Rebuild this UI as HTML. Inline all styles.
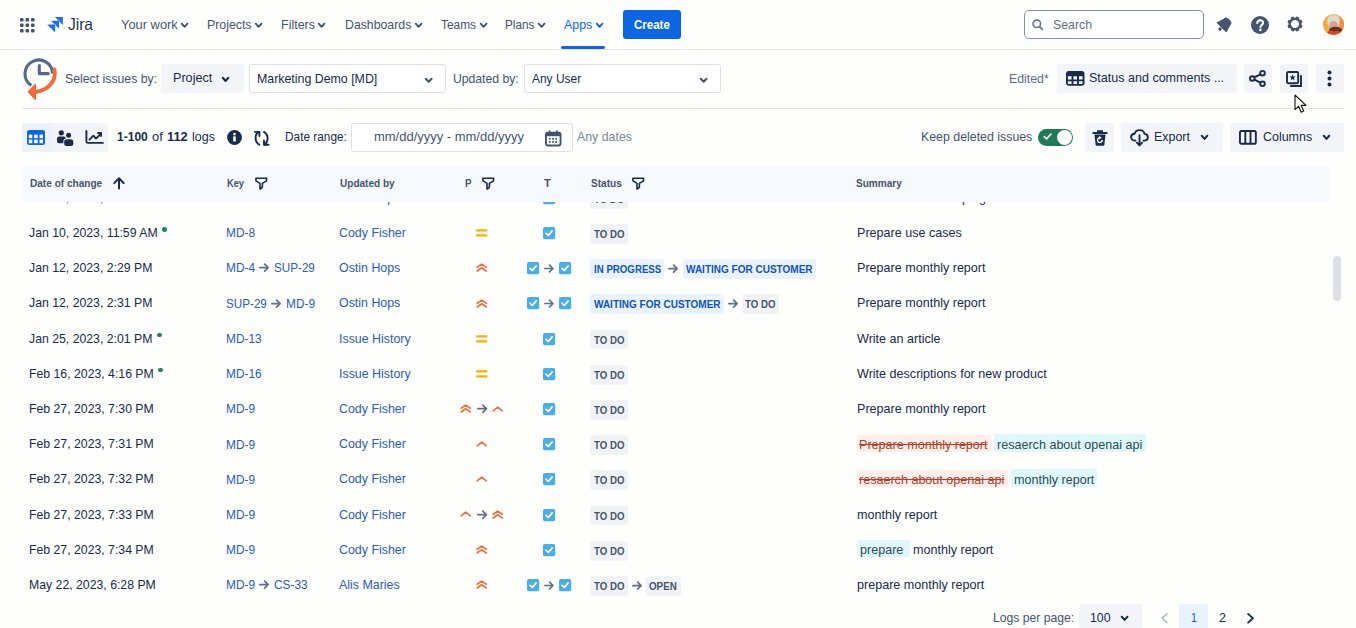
<!DOCTYPE html><html><head><meta charset="utf-8"><style>
html,body{margin:0;padding:0;background:#FEFEFD;width:1356px;height:628px;overflow:hidden;position:relative;font-family:"Liberation Sans", sans-serif;}
.t{position:absolute;white-space:nowrap;line-height:1;transform-origin:0 0;}
.b{position:absolute;}
.s{position:absolute;overflow:visible;}
</style></head><body>
<div class="b" style="left:0.00px;top:49.00px;width:1356.00px;height:1.00px;background:#E4E6EA;border-radius:0px;"></div>
<svg class="s" style="left:20.00px;top:17.60px;" width="14.60" height="14.60" viewBox="0 0 14.60 14.60"><rect x="0.00" y="0.00" width="3.6" height="3.6" rx="1.1" fill="#44546F"/><rect x="5.50" y="0.00" width="3.6" height="3.6" rx="1.1" fill="#44546F"/><rect x="11.00" y="0.00" width="3.6" height="3.6" rx="1.1" fill="#44546F"/><rect x="0.00" y="5.50" width="3.6" height="3.6" rx="1.1" fill="#44546F"/><rect x="5.50" y="5.50" width="3.6" height="3.6" rx="1.1" fill="#44546F"/><rect x="11.00" y="5.50" width="3.6" height="3.6" rx="1.1" fill="#44546F"/><rect x="0.00" y="11.00" width="3.6" height="3.6" rx="1.1" fill="#44546F"/><rect x="5.50" y="11.00" width="3.6" height="3.6" rx="1.1" fill="#44546F"/><rect x="11.00" y="11.00" width="3.6" height="3.6" rx="1.1" fill="#44546F"/></svg>
<svg class="s" style="left:44.00px;top:17.00px;" width="20.00" height="16.00" viewBox="0 0 20.00 16.00"><path d="M11.00 0.00 H18.90 V7.90 L15.30 4.60 V3.60 H14.30 Z" fill="#1D6FF0"/><path d="M7.10 3.70 H15.00 V11.60 L11.40 8.30 V7.30 H10.40 Z" fill="#1D6FF0"/><path d="M3.30 7.50 H11.20 V15.40 L7.60 12.10 V11.10 H6.60 Z" fill="#1D6FF0"/></svg>
<div class="t" style="left:68.40px;top:15.83px;font-size:16.5px;color:#26344F;font-weight:400;transform:scaleX(0.9404);">Jira</div>
<div class="t" style="left:120.60px;top:18.56px;font-size:12.8px;color:#44546F;font-weight:400;transform:scaleX(1.0063);">Your work</div>
<svg class="s" style="left:181.00px;top:22.90px;" width="7.20" height="4.70" viewBox="0 0 7.20 4.70"><path d="M0.71 0.71 L3.60 3.85 L6.49 0.71" fill="none" stroke="#44546F" stroke-width="1.9" stroke-linecap="round" stroke-linejoin="round"/></svg>
<div class="t" style="left:207.30px;top:18.56px;font-size:12.8px;color:#44546F;font-weight:400;transform:scaleX(0.9625);">Projects</div>
<svg class="s" style="left:255.00px;top:22.90px;" width="7.20" height="4.70" viewBox="0 0 7.20 4.70"><path d="M0.71 0.71 L3.60 3.85 L6.49 0.71" fill="none" stroke="#44546F" stroke-width="1.9" stroke-linecap="round" stroke-linejoin="round"/></svg>
<div class="t" style="left:281.00px;top:18.56px;font-size:12.8px;color:#44546F;font-weight:400;transform:scaleX(0.9758);">Filters</div>
<svg class="s" style="left:318.30px;top:22.90px;" width="7.20" height="4.70" viewBox="0 0 7.20 4.70"><path d="M0.71 0.71 L3.60 3.85 L6.49 0.71" fill="none" stroke="#44546F" stroke-width="1.9" stroke-linecap="round" stroke-linejoin="round"/></svg>
<div class="t" style="left:344.70px;top:18.56px;font-size:12.8px;color:#44546F;font-weight:400;transform:scaleX(0.9607);">Dashboards</div>
<svg class="s" style="left:415.20px;top:22.90px;" width="7.20" height="4.70" viewBox="0 0 7.20 4.70"><path d="M0.71 0.71 L3.60 3.85 L6.49 0.71" fill="none" stroke="#44546F" stroke-width="1.9" stroke-linecap="round" stroke-linejoin="round"/></svg>
<div class="t" style="left:440.50px;top:18.56px;font-size:12.8px;color:#44546F;font-weight:400;transform:scaleX(0.9284);">Teams</div>
<svg class="s" style="left:479.60px;top:22.90px;" width="7.20" height="4.70" viewBox="0 0 7.20 4.70"><path d="M0.71 0.71 L3.60 3.85 L6.49 0.71" fill="none" stroke="#44546F" stroke-width="1.9" stroke-linecap="round" stroke-linejoin="round"/></svg>
<div class="t" style="left:504.70px;top:18.56px;font-size:12.8px;color:#44546F;font-weight:400;transform:scaleX(0.9182);">Plans</div>
<svg class="s" style="left:538.30px;top:22.90px;" width="7.20" height="4.70" viewBox="0 0 7.20 4.70"><path d="M0.71 0.71 L3.60 3.85 L6.49 0.71" fill="none" stroke="#44546F" stroke-width="1.9" stroke-linecap="round" stroke-linejoin="round"/></svg>
<div class="t" style="left:564.00px;top:18.56px;font-size:12.8px;color:#0C66E4;font-weight:400;transform:scaleX(0.9666);">Apps</div>
<svg class="s" style="left:596.20px;top:22.90px;" width="7.20" height="4.70" viewBox="0 0 7.20 4.70"><path d="M0.71 0.71 L3.60 3.85 L6.49 0.71" fill="none" stroke="#0C66E4" stroke-width="1.9" stroke-linecap="round" stroke-linejoin="round"/></svg>
<div class="b" style="left:561.00px;top:46.30px;width:44.00px;height:3.00px;background:#0C66E4;border-radius:1.5px;"></div>
<div class="b" style="left:623.20px;top:10.00px;width:57.60px;height:28.70px;background:#0C66E4;border-radius:3px;"></div>
<div class="t" style="left:634.00px;top:18.03px;font-size:13.2px;color:#FFFFFF;font-weight:700;transform:scaleX(0.8738);">Create</div>
<div class="b" style="left:1024.30px;top:10.00px;width:179.30px;height:29.00px;background:#FFFFFF;border:1px solid #8590A2;box-sizing:border-box;border-radius:5px;"></div>
<svg class="s" style="left:1032.30px;top:18.80px;" width="11.50" height="11.50" viewBox="0 0 11.50 11.50"><circle cx="4.8" cy="4.8" r="3.8" fill="none" stroke="#626F86" stroke-width="1.5"/><path d="M7.6 7.6 L10.5 10.5" stroke="#626F86" stroke-width="1.6" stroke-linecap="round"/></svg>
<div class="t" style="left:1052.70px;top:18.00px;font-size:13.0px;color:#626F86;font-weight:400;transform:scaleX(0.9469);">Search</div>
<svg class="s" style="left:1215.60px;top:15.80px;" width="17.00" height="17.00" viewBox="0 0 17.00 17.00"><g transform="rotate(45 8.5 8.5)"><path d="M4.7 3.2 C5.2 1.3 11.8 1.3 12.3 3.2 L15 12.6 H2 Z" fill="#44546F" stroke="#44546F" stroke-width="0.8" stroke-linejoin="round"/><circle cx="8.5" cy="14.9" r="1.7" fill="#44546F"/></g></svg>
<svg class="s" style="left:1251.10px;top:15.70px;" width="18.00" height="18.00" viewBox="0 0 18.00 18.00"><circle cx="9" cy="9" r="9" fill="#44546F"/><path d="M6.3 7.1 C6.3 5.3 7.6 4.3 9.1 4.3 C10.8 4.3 12 5.4 12 6.9 C12 8.9 9.4 9.1 9.4 11" fill="none" stroke="#fff" stroke-width="2.1" stroke-linecap="round"/><circle cx="9.35" cy="13.9" r="1.3" fill="#fff"/></svg>
<svg class="s" style="left:1287.30px;top:16.30px;" width="16.00" height="16.00" viewBox="0 0 16.00 16.00"><rect x="6.4" y="0.4" width="3.2" height="3.4" rx="0.4" fill="#44546F" transform="rotate(22.5 8 8)"/><rect x="6.4" y="0.4" width="3.2" height="3.4" rx="0.4" fill="#44546F" transform="rotate(67.5 8 8)"/><rect x="6.4" y="0.4" width="3.2" height="3.4" rx="0.4" fill="#44546F" transform="rotate(112.5 8 8)"/><rect x="6.4" y="0.4" width="3.2" height="3.4" rx="0.4" fill="#44546F" transform="rotate(157.5 8 8)"/><rect x="6.4" y="0.4" width="3.2" height="3.4" rx="0.4" fill="#44546F" transform="rotate(202.5 8 8)"/><rect x="6.4" y="0.4" width="3.2" height="3.4" rx="0.4" fill="#44546F" transform="rotate(247.5 8 8)"/><rect x="6.4" y="0.4" width="3.2" height="3.4" rx="0.4" fill="#44546F" transform="rotate(292.5 8 8)"/><rect x="6.4" y="0.4" width="3.2" height="3.4" rx="0.4" fill="#44546F" transform="rotate(337.5 8 8)"/><circle cx="8" cy="8" r="5.3" fill="none" stroke="#44546F" stroke-width="2.4"/></svg>
<svg class="s" style="left:1323.00px;top:14.00px;" width="21.20" height="21.20" viewBox="0 0 21.20 21.20"><defs><clipPath id="avc"><circle cx="10.6" cy="10.6" r="10.5"/></clipPath></defs><g clip-path="url(#avc)"><rect width="21.2" height="21.2" fill="#E9B47A"/><rect x="0" width="5" height="21.2" fill="#F2A93A"/><rect x="16.5" width="5" height="21.2" fill="#EE8F3A"/><ellipse cx="10.4" cy="7.2" rx="6.4" ry="6.2" fill="#E4D6CA"/><ellipse cx="10.6" cy="11.2" rx="4.1" ry="4.3" fill="#D3A292"/><ellipse cx="12.5" cy="16" rx="6.5" ry="3.2" fill="#6E3024"/><path d="M2.5 21.2 C4 16.5 9 15.5 11 17.5 C13 15.8 18 16.5 19.5 21.2 Z" fill="#D9471F"/></g></svg>
<svg class="s" style="left:22.00px;top:55.00px;" width="40.00" height="48.00" viewBox="0 0 40.00 48.00"><g transform="translate(0 0.8)"><path d="M9.3 29.6 A13.8 13.8 0 1 1 30.6 17.8" fill="none" stroke="#55698A" stroke-width="3.1"/><path d="M17.3 9.7 V17.8 H26.3" fill="none" stroke="#55698A" stroke-width="3.1" stroke-linecap="round" stroke-linejoin="round"/></g><path d="M32.4 14.5 C34.6 25 27.5 35.3 12.5 37.2" fill="none" stroke="#F26B3A" stroke-width="4" stroke-linecap="round"/><path d="M6.3 36.8 L13.4 29.6 L13.4 44.3 Z" fill="#F26B3A" stroke="#F26B3A" stroke-width="1.4" stroke-linejoin="round"/></svg>
<div class="t" style="left:65.00px;top:71.63px;font-size:13.2px;color:#44546F;font-weight:400;transform:scaleX(0.9309);">Select issues by:</div>
<div class="b" style="left:161.00px;top:64.20px;width:82.90px;height:28.60px;background:#F2F4F7;border-radius:3px;"></div>
<div class="t" style="left:172.70px;top:70.73px;font-size:13.2px;color:#172B4D;font-weight:400;transform:scaleX(0.9566);">Project</div>
<svg class="s" style="left:222.20px;top:76.80px;" width="7.10" height="4.90" viewBox="0 0 7.10 4.90"><path d="M0.75 0.75 L3.55 4.00 L6.35 0.75" fill="none" stroke="#172B4D" stroke-width="2.0" stroke-linecap="round" stroke-linejoin="round"/></svg>
<div class="b" style="left:248.50px;top:64.20px;width:197.20px;height:28.40px;background:#FFFFFF;border:1px solid #DFE1E6;box-sizing:border-box;border-radius:3px;"></div>
<div class="t" style="left:256.80px;top:71.63px;font-size:13.2px;color:#172B4D;font-weight:400;transform:scaleX(0.9380);">Marketing Demo [MD]</div>
<svg class="s" style="left:425.00px;top:77.70px;" width="7.40" height="4.70" viewBox="0 0 7.40 4.70"><path d="M0.75 0.75 L3.70 3.80 L6.65 0.75" fill="none" stroke="#44546F" stroke-width="2.0" stroke-linecap="round" stroke-linejoin="round"/></svg>
<div class="t" style="left:453.30px;top:71.63px;font-size:13.2px;color:#44546F;font-weight:400;transform:scaleX(0.9231);">Updated by:</div>
<div class="b" style="left:523.50px;top:64.20px;width:197.20px;height:28.40px;background:#FFFFFF;border:1px solid #DFE1E6;box-sizing:border-box;border-radius:3px;"></div>
<div class="t" style="left:531.70px;top:71.63px;font-size:13.2px;color:#172B4D;font-weight:400;transform:scaleX(0.9064);">Any User</div>
<svg class="s" style="left:700.00px;top:77.70px;" width="7.30" height="4.70" viewBox="0 0 7.30 4.70"><path d="M0.75 0.75 L3.65 3.80 L6.55 0.75" fill="none" stroke="#44546F" stroke-width="2.0" stroke-linecap="round" stroke-linejoin="round"/></svg>
<div class="t" style="left:1009.20px;top:71.83px;font-size:13.2px;color:#626F86;font-weight:400;transform:scaleX(0.9351);">Edited*</div>
<div class="b" style="left:1057.20px;top:64.20px;width:179.60px;height:28.80px;background:#F2F4F7;border-radius:3px;"></div>
<svg class="s" style="left:1065.60px;top:71.30px;" width="18.50" height="14.80" viewBox="0 0 18.50 14.80"><rect x="0.95" y="0.95" width="16.6" height="12.9" rx="1.8" fill="none" stroke="#172B4D" stroke-width="1.9"/><rect x="1" y="1" width="16.5" height="4.2" fill="#172B4D"/><path d="M1 9.4 H17.5 M6.5 5 V13.8 M12 5 V13.8" stroke="#172B4D" stroke-width="1.9"/></svg>
<div class="t" style="left:1089.30px;top:71.33px;font-size:13.2px;color:#172B4D;font-weight:400;transform:scaleX(0.9500);">Status and comments ...</div>
<div class="b" style="left:1244.20px;top:64.20px;width:27.50px;height:28.80px;background:#F2F4F7;border-radius:3px;"></div>
<div class="b" style="left:1280.00px;top:64.20px;width:27.70px;height:28.80px;background:#F2F4F7;border-radius:3px;"></div>
<div class="b" style="left:1315.80px;top:64.20px;width:28.20px;height:28.80px;background:#F2F4F7;border-radius:3px;"></div>
<svg class="s" style="left:1249.30px;top:70.30px;" width="17.00" height="17.00" viewBox="0 0 17.00 17.00"><circle cx="3.3" cy="8.5" r="2.3" fill="none" stroke="#172B4D" stroke-width="1.9"/><circle cx="13.5" cy="3.2" r="2.3" fill="none" stroke="#172B4D" stroke-width="1.9"/><circle cx="13.5" cy="13.8" r="2.3" fill="none" stroke="#172B4D" stroke-width="1.9"/><path d="M5.4 7.4 L11.4 4.3 M5.4 9.6 L11.4 12.7" stroke="#172B4D" stroke-width="1.9"/></svg>
<svg class="s" style="left:1285.50px;top:70.50px;" width="17.00" height="17.00" viewBox="0 0 17.00 17.00"><rect x="1" y="1" width="11.2" height="11.2" rx="1.2" fill="none" stroke="#172B4D" stroke-width="1.9"/><path d="M15 4.2 V15 H4.2" fill="none" stroke="#172B4D" stroke-width="1.9"/><path d="M6.6 3.2 L7.4 5.4 L9.7 5.5 L7.9 6.9 L8.5 9.2 L6.6 7.9 L4.7 9.2 L5.3 6.9 L3.5 5.5 L5.8 5.4 Z" fill="#172B4D"/></svg>
<svg class="s" style="left:1327.40px;top:70.30px;" width="5.00" height="17.00" viewBox="0 0 5.00 17.00"><circle cx="2.5" cy="2.4" r="2" fill="#172B4D"/><circle cx="2.5" cy="8.5" r="2" fill="#172B4D"/><circle cx="2.5" cy="14.6" r="2" fill="#172B4D"/></svg>
<div class="b" style="left:22.00px;top:107.80px;width:1322.00px;height:1.00px;background:#DFE1E6;border-radius:0px;"></div>
<div class="b" style="left:22.00px;top:123.00px;width:86.00px;height:29.00px;background:#F2F4F7;border-radius:3px;"></div>
<div class="b" style="left:22.00px;top:123.00px;width:30.00px;height:29.00px;background:#ECF1FA;border-radius:3px;"></div>
<svg class="s" style="left:27.00px;top:130.00px;" width="18.00" height="15.00" viewBox="0 0 18.00 15.00"><rect x="0" y="0" width="18" height="15" rx="2.3" fill="#0C66E4"/><rect x="1.80" y="4.60" width="3.5" height="3.6" fill="#fff"/><rect x="7.15" y="4.60" width="3.5" height="3.6" fill="#fff"/><rect x="12.50" y="4.60" width="3.5" height="3.6" fill="#fff"/><rect x="1.80" y="9.60" width="3.5" height="3.6" fill="#fff"/><rect x="7.15" y="9.60" width="3.5" height="3.6" fill="#fff"/><rect x="12.50" y="9.60" width="3.5" height="3.6" fill="#fff"/></svg>
<svg class="s" style="left:56.80px;top:129.60px;" width="16.50" height="16.00" viewBox="0 0 16.50 16.00"><circle cx="4.3" cy="2.8" r="2.6" fill="#172B4D"/><rect x="0" y="6.6" width="8.8" height="6.6" rx="2.2" fill="#172B4D"/><circle cx="11.6" cy="5.3" r="3.3" fill="#F2F4F7"/><circle cx="11.6" cy="5.3" r="2.5" fill="#172B4D"/><rect x="6.4" y="8.6" width="10.1" height="7.6" rx="2.8" fill="#F2F4F7"/><rect x="7.2" y="9.3" width="9.1" height="6.7" rx="2.5" fill="#172B4D"/></svg>
<svg class="s" style="left:84.50px;top:130.30px;" width="19.00" height="14.50" viewBox="0 0 19.00 14.50"><path d="M1.4 1.0 V11.4 Q1.4 12.9 2.9 12.9 H17.9" fill="none" stroke="#172B4D" stroke-width="1.9" stroke-linecap="round"/><path d="M4.4 9.6 L8.4 5.6 L11.0 8.6 L15.6 4.0" fill="none" stroke="#172B4D" stroke-width="1.8" stroke-linecap="round" stroke-linejoin="round"/><path d="M12.4 3.0 H16.1 V6.8" fill="none" stroke="#172B4D" stroke-width="1.8" stroke-linejoin="round"/></svg>
<div class="t" style="left:116.50px;top:129.83px;font-size:13.2px;color:#172B4D;font-weight:700;transform:scaleX(0.9124);">1-100</div>
<div class="t" style="left:151.90px;top:129.83px;font-size:13.2px;color:#172B4D;font-weight:400;transform:scaleX(0.9811);">of</div>
<div class="t" style="left:167.10px;top:129.83px;font-size:13.2px;color:#172B4D;font-weight:700;transform:scaleX(0.9721);">112</div>
<div class="t" style="left:192.30px;top:129.83px;font-size:13.2px;color:#172B4D;font-weight:400;transform:scaleX(0.9457);">logs</div>
<svg class="s" style="left:226.60px;top:130.30px;" width="15.00" height="15.00" viewBox="0 0 15.00 15.00"><circle cx="7.5" cy="7.5" r="7.4" fill="#172B4D"/><circle cx="7.5" cy="4.1" r="1.35" fill="#fff"/><rect x="6.2" y="6.3" width="2.6" height="5.3" rx="0.6" fill="#fff"/></svg>
<svg class="s" style="left:254.20px;top:129.60px;" width="16.00" height="16.00" viewBox="0 0 16.00 16.00"><path d="M4.8 1.9 C0.4 4.6 0.4 11.6 5.4 14.8" fill="none" stroke="#172B4D" stroke-width="1.9" stroke-linecap="round"/><path d="M1.0 1.9 H5.4 V6.0" fill="none" stroke="#172B4D" stroke-width="1.9" stroke-linecap="round" stroke-linejoin="round"/><path d="M10.0 1.9 C14.8 5.0 14.6 11.6 10.6 14.8" fill="none" stroke="#172B4D" stroke-width="1.9" stroke-linecap="round"/><path d="M14.6 14.8 H10.0 V10.4" fill="none" stroke="#172B4D" stroke-width="1.9" stroke-linecap="round" stroke-linejoin="round"/></svg>
<div class="t" style="left:284.50px;top:129.83px;font-size:13.2px;color:#172B4D;font-weight:400;transform:scaleX(0.8975);">Date range:</div>
<div class="b" style="left:351.30px;top:123.30px;width:221.60px;height:28.30px;background:#FFFFFF;border:1px solid #DFE1E6;box-sizing:border-box;border-radius:3px;"></div>
<div class="t" style="left:373.50px;top:129.83px;font-size:13.2px;color:#44546F;font-weight:400;transform:scaleX(0.9840);">mm/dd/yyyy - mm/dd/yyyy</div>
<svg class="s" style="left:545.30px;top:129.60px;" width="16.50" height="16.50" viewBox="0 0 16.50 16.50"><rect x="0.95" y="2.6" width="14.6" height="12.9" rx="2" fill="none" stroke="#44546F" stroke-width="1.9"/><rect x="1" y="2.6" width="14.5" height="3.6" fill="#44546F"/><path d="M4.6 0.5 V3.6 M11.9 0.5 V3.6" stroke="#44546F" stroke-width="1.8"/><rect x="3.90" y="8.00" width="1.8" height="1.7" fill="#44546F"/><rect x="7.10" y="8.00" width="1.8" height="1.7" fill="#44546F"/><rect x="10.30" y="8.00" width="1.8" height="1.7" fill="#44546F"/><rect x="3.90" y="11.00" width="1.8" height="1.7" fill="#44546F"/><rect x="7.10" y="11.00" width="1.8" height="1.7" fill="#44546F"/><rect x="10.30" y="11.00" width="1.8" height="1.7" fill="#44546F"/></svg>
<div class="t" style="left:577.20px;top:129.83px;font-size:13.2px;color:#7A8699;font-weight:400;transform:scaleX(0.9370);">Any dates</div>
<div class="t" style="left:921.30px;top:129.83px;font-size:13.2px;color:#44546F;font-weight:400;transform:scaleX(0.9371);">Keep deleted issues</div>
<div class="b" style="left:1038.10px;top:129.20px;width:34.70px;height:16.60px;background:#1F7A56;border-radius:9px;"></div>
<svg class="s" style="left:1042.80px;top:132.40px;" width="10.00" height="9.00" viewBox="0 0 10.00 9.00"><path d="M1.2 4.6 L3.6 6.9 L8.0 2.0" fill="none" stroke="#fff" stroke-width="1.6" stroke-linecap="round" stroke-linejoin="round"/></svg>
<div class="b" style="left:1056.6px;top:130.0px;width:15.0px;height:15.0px;border-radius:50%;background:#fff;"></div>
<div class="b" style="left:1085.10px;top:123.30px;width:29.00px;height:28.70px;background:#F2F4F7;border-radius:3px;"></div>
<svg class="s" style="left:1091.50px;top:129.60px;" width="16.00" height="16.50" viewBox="0 0 16.00 16.50"><path d="M2.5 4.6 H13.5 L12.4 14.7 C12.3 15.3 11.9 15.7 11.3 15.7 H4.7 C4.1 15.7 3.7 15.3 3.6 14.7 Z" fill="#172B4D"/><path d="M1.3 3 H14.7" stroke="#172B4D" stroke-width="2" stroke-linecap="round"/><path d="M5.8 2.8 V1.1 H10.2 V2.8" fill="none" stroke="#172B4D" stroke-width="1.6"/><path d="M10.3 10.1 A2.4 2.4 0 1 1 8.1 7.7" fill="none" stroke="#fff" stroke-width="1.4"/><path d="M7.1 6.5 L8.7 7.7 L7.1 8.9" fill="none" stroke="#fff" stroke-width="1.2"/></svg>
<div class="b" style="left:1121.20px;top:123.30px;width:101.50px;height:28.70px;background:#F2F4F7;border-radius:3px;"></div>
<svg class="s" style="left:1130.30px;top:128.80px;" width="19.00" height="18.50" viewBox="0 0 19.00 18.50"><path d="M6.3 11.6 H5.0 C2.8 11.6 1.1 10.1 1.1 8.1 C1.1 6.2 2.6 4.8 4.6 4.7 C5.2 2.5 7.2 1.1 9.6 1.1 C12.1 1.1 14.1 2.7 14.5 4.9 C16.4 5.0 17.8 6.4 17.8 8.2 C17.8 10.1 16.3 11.6 14.2 11.6 H12.8" fill="none" stroke="#172B4D" stroke-width="1.9" stroke-linejoin="round"/><path d="M9.5 6.3 V16.4 M6.9 13.7 L9.5 16.4 L12.1 13.7" fill="none" stroke="#172B4D" stroke-width="1.9" stroke-linecap="round" stroke-linejoin="round"/></svg>
<div class="t" style="left:1154.20px;top:129.83px;font-size:13.2px;color:#172B4D;font-weight:400;transform:scaleX(0.9411);">Export</div>
<svg class="s" style="left:1201.40px;top:135.40px;" width="7.10" height="4.80" viewBox="0 0 7.10 4.80"><path d="M0.75 0.75 L3.55 3.90 L6.35 0.75" fill="none" stroke="#172B4D" stroke-width="2.0" stroke-linecap="round" stroke-linejoin="round"/></svg>
<div class="b" style="left:1230.00px;top:122.80px;width:113.90px;height:28.80px;background:#F2F4F7;border-radius:3px;"></div>
<svg class="s" style="left:1238.90px;top:130.20px;" width="17.80" height="14.70" viewBox="0 0 17.80 14.70"><rect x="0.95" y="0.95" width="15.9" height="12.8" rx="1.6" fill="none" stroke="#172B4D" stroke-width="1.9"/><path d="M6.3 1 V13.7 M11.5 1 V13.7" stroke="#172B4D" stroke-width="1.9"/></svg>
<div class="t" style="left:1262.60px;top:129.83px;font-size:13.2px;color:#172B4D;font-weight:400;transform:scaleX(0.9447);">Columns</div>
<svg class="s" style="left:1323.30px;top:135.40px;" width="7.00" height="4.80" viewBox="0 0 7.00 4.80"><path d="M0.75 0.75 L3.50 3.90 L6.25 0.75" fill="none" stroke="#172B4D" stroke-width="2.0" stroke-linecap="round" stroke-linejoin="round"/></svg>
<div style="position:absolute;left:0;top:201.5px;width:1356px;height:426.5px;overflow:hidden;">
<div style="position:absolute;left:0;top:-201.5px;width:1356px;height:628px;">
<div class="t" style="left:29.30px;top:190.65px;font-size:13.2px;color:#172B4D;font-weight:400;transform:scaleX(0.9300);">Jan 10, 2023, 11:56 AM</div>
<div class="t" style="left:226.00px;top:191.05px;font-size:13.2px;color:#2A5CB9;font-weight:400;transform:scaleX(0.9000);">MD-8</div>
<div class="t" style="left:339.40px;top:190.65px;font-size:13.2px;color:#2A5CB9;font-weight:400;transform:scaleX(0.9400);">Ostin Hops</div>
<svg class="s" style="left:476.40px;top:193.02px;" width="11.40" height="9.00" viewBox="0 0 11.40 9.00"><path d="M1.1 4.3 L5.7 1.1 L10.3 4.3 M1.1 8 L5.7 4.8 L10.3 8" fill="none" stroke="#F26B3A" stroke-width="1.65" stroke-linecap="round" stroke-linejoin="round"/></svg>
<svg class="s" style="left:542.90px;top:191.72px;" width="12.20" height="12.20" viewBox="0 0 12.20 12.20"><rect x="0" y="0" width="12.2" height="12.2" rx="1.7" fill="#4BADE8"/><path d="M3.1 6.4 L5.3 8.5 L9.2 3.9" fill="none" stroke="#fff" stroke-width="1.7" stroke-linecap="round" stroke-linejoin="round"/></svg>
<div class="b" style="left:590.20px;top:188.72px;width:37.39px;height:19.80px;background:#F1F2F4;border-radius:3px;"></div>
<div class="t" style="left:593.70px;top:193.64px;font-size:11.8px;color:#44546F;font-weight:700;transform:scaleX(0.8180);">TO DO</div>
<div class="t" style="left:961.50px;top:190.65px;font-size:13.2px;color:#172B4D;font-weight:400;transform:scaleX(0.9530);">p</div>
<div class="t" style="left:978.60px;top:190.65px;font-size:13.2px;color:#172B4D;font-weight:400;transform:scaleX(0.9530);">g</div>
<div class="t" style="left:29.30px;top:225.87px;font-size:13.2px;color:#172B4D;font-weight:400;transform:scaleX(0.9300);">Jan 10, 2023, 11:59 AM</div>
<div class="b" style="left:162.36px;top:226.94px;width:4.6px;height:4.6px;border-radius:50%;background:#1F845A;"></div>
<div class="t" style="left:226.00px;top:226.27px;font-size:13.2px;color:#2A5CB9;font-weight:400;transform:scaleX(0.9000);">MD-8</div>
<div class="t" style="left:339.40px;top:225.87px;font-size:13.2px;color:#2A5CB9;font-weight:400;transform:scaleX(0.9400);">Cody Fisher</div>
<svg class="s" style="left:476.40px;top:229.04px;" width="11.40" height="7.80" viewBox="0 0 11.40 7.80"><path d="M1.1 1.4 H10.3 M1.1 6.4 H10.3" stroke="#FFAB00" stroke-width="2.3" stroke-linecap="round"/></svg>
<svg class="s" style="left:542.90px;top:226.94px;" width="12.20" height="12.20" viewBox="0 0 12.20 12.20"><rect x="0" y="0" width="12.2" height="12.2" rx="1.7" fill="#4BADE8"/><path d="M3.1 6.4 L5.3 8.5 L9.2 3.9" fill="none" stroke="#fff" stroke-width="1.7" stroke-linecap="round" stroke-linejoin="round"/></svg>
<div class="b" style="left:590.20px;top:223.94px;width:37.39px;height:19.80px;background:#F1F2F4;border-radius:3px;"></div>
<div class="t" style="left:593.70px;top:228.85px;font-size:11.8px;color:#44546F;font-weight:700;transform:scaleX(0.8180);">TO DO</div>
<div class="t" style="left:857.10px;top:225.87px;font-size:13.2px;color:#172B4D;font-weight:400;transform:scaleX(0.9530);">Prepare use cases</div>
<div class="t" style="left:29.30px;top:261.08px;font-size:13.2px;color:#172B4D;font-weight:400;transform:scaleX(0.9300);">Jan 12, 2023, 2:29 PM</div>
<div class="t" style="left:226.00px;top:261.48px;font-size:13.2px;color:#2A5CB9;font-weight:400;transform:scaleX(0.9000);">MD-4</div>
<svg class="s" style="left:259.44px;top:263.36px;" width="10.20" height="9.18" viewBox="0 0 10.20 9.18"><path d="M0.85 4.59 H9.15 M5.61 1.05 L9.15 4.59 L5.61 8.13" fill="none" stroke="#626F86" stroke-width="1.7" stroke-linecap="round" stroke-linejoin="round"/></svg>
<div class="t" style="left:273.94px;top:261.48px;font-size:13.2px;color:#2A5CB9;font-weight:400;transform:scaleX(0.8850);">SUP-29</div>
<div class="t" style="left:339.40px;top:261.08px;font-size:13.2px;color:#2A5CB9;font-weight:400;transform:scaleX(0.9400);">Ostin Hops</div>
<svg class="s" style="left:476.40px;top:263.45px;" width="11.40" height="9.00" viewBox="0 0 11.40 9.00"><path d="M1.1 4.3 L5.7 1.1 L10.3 4.3 M1.1 8 L5.7 4.8 L10.3 8" fill="none" stroke="#F26B3A" stroke-width="1.65" stroke-linecap="round" stroke-linejoin="round"/></svg>
<svg class="s" style="left:527.10px;top:262.15px;" width="12.20" height="12.20" viewBox="0 0 12.20 12.20"><rect x="0" y="0" width="12.2" height="12.2" rx="1.7" fill="#4BADE8"/><path d="M3.1 6.4 L5.3 8.5 L9.2 3.9" fill="none" stroke="#fff" stroke-width="1.7" stroke-linecap="round" stroke-linejoin="round"/></svg>
<svg class="s" style="left:544.00px;top:263.65px;" width="10.00" height="9.00" viewBox="0 0 10.00 9.00"><path d="M0.85 4.50 H8.95 M5.50 1.05 L8.95 4.50 L5.50 7.95" fill="none" stroke="#626F86" stroke-width="1.7" stroke-linecap="round" stroke-linejoin="round"/></svg>
<svg class="s" style="left:559.20px;top:262.15px;" width="12.20" height="12.20" viewBox="0 0 12.20 12.20"><rect x="0" y="0" width="12.2" height="12.2" rx="1.7" fill="#4BADE8"/><path d="M3.1 6.4 L5.3 8.5 L9.2 3.9" fill="none" stroke="#fff" stroke-width="1.7" stroke-linecap="round" stroke-linejoin="round"/></svg>
<div class="b" style="left:590.20px;top:259.15px;width:74.29px;height:19.80px;background:#EAF2FD;border-radius:3px;"></div>
<div class="t" style="left:593.70px;top:264.07px;font-size:11.8px;color:#0B54C4;font-weight:700;transform:scaleX(0.8210);">IN PROGRESS</div>
<svg class="s" style="left:668.49px;top:264.26px;" width="10.20" height="9.18" viewBox="0 0 10.20 9.18"><path d="M0.85 4.59 H9.15 M5.61 1.05 L9.15 4.59 L5.61 8.13" fill="none" stroke="#626F86" stroke-width="1.7" stroke-linecap="round" stroke-linejoin="round"/></svg>
<div class="b" style="left:682.69px;top:259.15px;width:133.56px;height:19.80px;background:#EAF2FD;border-radius:3px;"></div>
<div class="t" style="left:686.19px;top:264.07px;font-size:11.8px;color:#0B54C4;font-weight:700;transform:scaleX(0.8480);">WAITING FOR CUSTOMER</div>
<div class="t" style="left:857.10px;top:261.08px;font-size:13.2px;color:#172B4D;font-weight:400;transform:scaleX(0.9530);">Prepare monthly report</div>
<div class="t" style="left:29.30px;top:296.30px;font-size:13.2px;color:#172B4D;font-weight:400;transform:scaleX(0.9300);">Jan 12, 2023, 2:31 PM</div>
<div class="t" style="left:226.00px;top:296.70px;font-size:13.2px;color:#2A5CB9;font-weight:400;transform:scaleX(0.8850);">SUP-29</div>
<svg class="s" style="left:271.30px;top:298.58px;" width="10.20" height="9.18" viewBox="0 0 10.20 9.18"><path d="M0.85 4.59 H9.15 M5.61 1.05 L9.15 4.59 L5.61 8.13" fill="none" stroke="#626F86" stroke-width="1.7" stroke-linecap="round" stroke-linejoin="round"/></svg>
<div class="t" style="left:285.80px;top:296.70px;font-size:13.2px;color:#2A5CB9;font-weight:400;transform:scaleX(0.9000);">MD-9</div>
<div class="t" style="left:339.40px;top:296.30px;font-size:13.2px;color:#2A5CB9;font-weight:400;transform:scaleX(0.9400);">Ostin Hops</div>
<svg class="s" style="left:476.40px;top:298.67px;" width="11.40" height="9.00" viewBox="0 0 11.40 9.00"><path d="M1.1 4.3 L5.7 1.1 L10.3 4.3 M1.1 8 L5.7 4.8 L10.3 8" fill="none" stroke="#F26B3A" stroke-width="1.65" stroke-linecap="round" stroke-linejoin="round"/></svg>
<svg class="s" style="left:527.10px;top:297.37px;" width="12.20" height="12.20" viewBox="0 0 12.20 12.20"><rect x="0" y="0" width="12.2" height="12.2" rx="1.7" fill="#4BADE8"/><path d="M3.1 6.4 L5.3 8.5 L9.2 3.9" fill="none" stroke="#fff" stroke-width="1.7" stroke-linecap="round" stroke-linejoin="round"/></svg>
<svg class="s" style="left:544.00px;top:298.87px;" width="10.00" height="9.00" viewBox="0 0 10.00 9.00"><path d="M0.85 4.50 H8.95 M5.50 1.05 L8.95 4.50 L5.50 7.95" fill="none" stroke="#626F86" stroke-width="1.7" stroke-linecap="round" stroke-linejoin="round"/></svg>
<svg class="s" style="left:559.20px;top:297.37px;" width="12.20" height="12.20" viewBox="0 0 12.20 12.20"><rect x="0" y="0" width="12.2" height="12.2" rx="1.7" fill="#4BADE8"/><path d="M3.1 6.4 L5.3 8.5 L9.2 3.9" fill="none" stroke="#fff" stroke-width="1.7" stroke-linecap="round" stroke-linejoin="round"/></svg>
<div class="b" style="left:590.20px;top:294.37px;width:133.56px;height:19.80px;background:#EAF2FD;border-radius:3px;"></div>
<div class="t" style="left:593.70px;top:299.28px;font-size:11.8px;color:#0B54C4;font-weight:700;transform:scaleX(0.8480);">WAITING FOR CUSTOMER</div>
<svg class="s" style="left:727.76px;top:299.48px;" width="10.20" height="9.18" viewBox="0 0 10.20 9.18"><path d="M0.85 4.59 H9.15 M5.61 1.05 L9.15 4.59 L5.61 8.13" fill="none" stroke="#626F86" stroke-width="1.7" stroke-linecap="round" stroke-linejoin="round"/></svg>
<div class="b" style="left:741.96px;top:294.37px;width:37.39px;height:19.80px;background:#F1F2F4;border-radius:3px;"></div>
<div class="t" style="left:745.46px;top:299.28px;font-size:11.8px;color:#44546F;font-weight:700;transform:scaleX(0.8180);">TO DO</div>
<div class="t" style="left:857.10px;top:296.30px;font-size:13.2px;color:#172B4D;font-weight:400;transform:scaleX(0.9530);">Prepare monthly report</div>
<div class="t" style="left:29.30px;top:331.51px;font-size:13.2px;color:#172B4D;font-weight:400;transform:scaleX(0.9300);">Jan 25, 2023, 2:01 PM</div>
<div class="b" style="left:157.12px;top:332.58px;width:4.6px;height:4.6px;border-radius:50%;background:#1F845A;"></div>
<div class="t" style="left:226.00px;top:331.91px;font-size:13.2px;color:#2A5CB9;font-weight:400;transform:scaleX(0.9000);">MD-13</div>
<div class="t" style="left:339.40px;top:331.51px;font-size:13.2px;color:#2A5CB9;font-weight:400;transform:scaleX(0.9400);">Issue History</div>
<svg class="s" style="left:476.40px;top:334.69px;" width="11.40" height="7.80" viewBox="0 0 11.40 7.80"><path d="M1.1 1.4 H10.3 M1.1 6.4 H10.3" stroke="#FFAB00" stroke-width="2.3" stroke-linecap="round"/></svg>
<svg class="s" style="left:542.90px;top:332.58px;" width="12.20" height="12.20" viewBox="0 0 12.20 12.20"><rect x="0" y="0" width="12.2" height="12.2" rx="1.7" fill="#4BADE8"/><path d="M3.1 6.4 L5.3 8.5 L9.2 3.9" fill="none" stroke="#fff" stroke-width="1.7" stroke-linecap="round" stroke-linejoin="round"/></svg>
<div class="b" style="left:590.20px;top:329.58px;width:37.39px;height:19.80px;background:#F1F2F4;border-radius:3px;"></div>
<div class="t" style="left:593.70px;top:334.50px;font-size:11.8px;color:#44546F;font-weight:700;transform:scaleX(0.8180);">TO DO</div>
<div class="t" style="left:857.10px;top:331.51px;font-size:13.2px;color:#172B4D;font-weight:400;transform:scaleX(0.9530);">Write an article</div>
<div class="t" style="left:29.30px;top:366.73px;font-size:13.2px;color:#172B4D;font-weight:400;transform:scaleX(0.9300);">Feb 16, 2023, 4:16 PM</div>
<div class="b" style="left:158.48px;top:367.80px;width:4.6px;height:4.6px;border-radius:50%;background:#1F845A;"></div>
<div class="t" style="left:226.00px;top:367.13px;font-size:13.2px;color:#2A5CB9;font-weight:400;transform:scaleX(0.9000);">MD-16</div>
<div class="t" style="left:339.40px;top:366.73px;font-size:13.2px;color:#2A5CB9;font-weight:400;transform:scaleX(0.9400);">Issue History</div>
<svg class="s" style="left:476.40px;top:369.90px;" width="11.40" height="7.80" viewBox="0 0 11.40 7.80"><path d="M1.1 1.4 H10.3 M1.1 6.4 H10.3" stroke="#FFAB00" stroke-width="2.3" stroke-linecap="round"/></svg>
<svg class="s" style="left:542.90px;top:367.80px;" width="12.20" height="12.20" viewBox="0 0 12.20 12.20"><rect x="0" y="0" width="12.2" height="12.2" rx="1.7" fill="#4BADE8"/><path d="M3.1 6.4 L5.3 8.5 L9.2 3.9" fill="none" stroke="#fff" stroke-width="1.7" stroke-linecap="round" stroke-linejoin="round"/></svg>
<div class="b" style="left:590.20px;top:364.80px;width:37.39px;height:19.80px;background:#F1F2F4;border-radius:3px;"></div>
<div class="t" style="left:593.70px;top:369.71px;font-size:11.8px;color:#44546F;font-weight:700;transform:scaleX(0.8180);">TO DO</div>
<div class="t" style="left:857.10px;top:366.73px;font-size:13.2px;color:#172B4D;font-weight:400;transform:scaleX(0.9530);">Write descriptions for new product</div>
<div class="t" style="left:29.30px;top:401.94px;font-size:13.2px;color:#172B4D;font-weight:400;transform:scaleX(0.9300);">Feb 27, 2023, 7:30 PM</div>
<div class="t" style="left:226.00px;top:402.34px;font-size:13.2px;color:#2A5CB9;font-weight:400;transform:scaleX(0.9000);">MD-9</div>
<div class="t" style="left:339.40px;top:401.94px;font-size:13.2px;color:#2A5CB9;font-weight:400;transform:scaleX(0.9400);">Cody Fisher</div>
<svg class="s" style="left:460.30px;top:404.31px;" width="11.40" height="9.00" viewBox="0 0 11.40 9.00"><path d="M1.1 4.3 L5.7 1.1 L10.3 4.3 M1.1 8 L5.7 4.8 L10.3 8" fill="none" stroke="#F26B3A" stroke-width="1.65" stroke-linecap="round" stroke-linejoin="round"/></svg>
<svg class="s" style="left:476.70px;top:404.09px;" width="10.50" height="9.45" viewBox="0 0 10.50 9.45"><path d="M0.85 4.73 H9.45 M5.77 1.05 L9.45 4.73 L5.77 8.40" fill="none" stroke="#626F86" stroke-width="1.7" stroke-linecap="round" stroke-linejoin="round"/></svg>
<svg class="s" style="left:492.30px;top:405.51px;" width="11.40" height="5.80" viewBox="0 0 11.40 5.80"><path d="M1.1 4.8 L5.7 1.1 L10.3 4.8" fill="none" stroke="#F26B3A" stroke-width="1.65" stroke-linecap="round" stroke-linejoin="round"/></svg>
<svg class="s" style="left:542.90px;top:403.01px;" width="12.20" height="12.20" viewBox="0 0 12.20 12.20"><rect x="0" y="0" width="12.2" height="12.2" rx="1.7" fill="#4BADE8"/><path d="M3.1 6.4 L5.3 8.5 L9.2 3.9" fill="none" stroke="#fff" stroke-width="1.7" stroke-linecap="round" stroke-linejoin="round"/></svg>
<div class="b" style="left:590.20px;top:400.01px;width:37.39px;height:19.80px;background:#F1F2F4;border-radius:3px;"></div>
<div class="t" style="left:593.70px;top:404.93px;font-size:11.8px;color:#44546F;font-weight:700;transform:scaleX(0.8180);">TO DO</div>
<div class="t" style="left:857.10px;top:401.94px;font-size:13.2px;color:#172B4D;font-weight:400;transform:scaleX(0.9530);">Prepare monthly report</div>
<div class="t" style="left:29.30px;top:437.16px;font-size:13.2px;color:#172B4D;font-weight:400;transform:scaleX(0.9300);">Feb 27, 2023, 7:31 PM</div>
<div class="t" style="left:226.00px;top:437.56px;font-size:13.2px;color:#2A5CB9;font-weight:400;transform:scaleX(0.9000);">MD-9</div>
<div class="t" style="left:339.40px;top:437.16px;font-size:13.2px;color:#2A5CB9;font-weight:400;transform:scaleX(0.9400);">Cody Fisher</div>
<svg class="s" style="left:476.40px;top:440.73px;" width="11.40" height="5.80" viewBox="0 0 11.40 5.80"><path d="M1.1 4.8 L5.7 1.1 L10.3 4.8" fill="none" stroke="#F26B3A" stroke-width="1.65" stroke-linecap="round" stroke-linejoin="round"/></svg>
<svg class="s" style="left:542.90px;top:438.23px;" width="12.20" height="12.20" viewBox="0 0 12.20 12.20"><rect x="0" y="0" width="12.2" height="12.2" rx="1.7" fill="#4BADE8"/><path d="M3.1 6.4 L5.3 8.5 L9.2 3.9" fill="none" stroke="#fff" stroke-width="1.7" stroke-linecap="round" stroke-linejoin="round"/></svg>
<div class="b" style="left:590.20px;top:435.23px;width:37.39px;height:19.80px;background:#F1F2F4;border-radius:3px;"></div>
<div class="t" style="left:593.70px;top:440.14px;font-size:11.8px;color:#44546F;font-weight:700;transform:scaleX(0.8180);">TO DO</div>
<div class="b" style="left:857.10px;top:435.03px;width:133.64px;height:17.10px;background:#FFEEEA;border-radius:2px;"></div>
<div class="t" style="left:859.30px;top:437.66px;font-size:13.2px;color:#9E4632;font-weight:400;transform:scaleX(0.9530);text-decoration:line-through;text-decoration-color:#C9372C;">Prepare monthly report</div>
<div class="b" style="left:994.14px;top:434.13px;width:151.46px;height:17.70px;background:#DFF8F9;border-radius:2px;"></div>
<div class="t" style="left:996.94px;top:437.66px;font-size:13.2px;color:#2C4A5A;font-weight:400;transform:scaleX(0.9530);">resaerch about openai api</div>
<div class="t" style="left:29.30px;top:472.37px;font-size:13.2px;color:#172B4D;font-weight:400;transform:scaleX(0.9300);">Feb 27, 2023, 7:32 PM</div>
<div class="t" style="left:226.00px;top:472.77px;font-size:13.2px;color:#2A5CB9;font-weight:400;transform:scaleX(0.9000);">MD-9</div>
<div class="t" style="left:339.40px;top:472.37px;font-size:13.2px;color:#2A5CB9;font-weight:400;transform:scaleX(0.9400);">Cody Fisher</div>
<svg class="s" style="left:476.40px;top:475.94px;" width="11.40" height="5.80" viewBox="0 0 11.40 5.80"><path d="M1.1 4.8 L5.7 1.1 L10.3 4.8" fill="none" stroke="#F26B3A" stroke-width="1.65" stroke-linecap="round" stroke-linejoin="round"/></svg>
<svg class="s" style="left:542.90px;top:473.44px;" width="12.20" height="12.20" viewBox="0 0 12.20 12.20"><rect x="0" y="0" width="12.2" height="12.2" rx="1.7" fill="#4BADE8"/><path d="M3.1 6.4 L5.3 8.5 L9.2 3.9" fill="none" stroke="#fff" stroke-width="1.7" stroke-linecap="round" stroke-linejoin="round"/></svg>
<div class="b" style="left:590.20px;top:470.44px;width:37.39px;height:19.80px;background:#F1F2F4;border-radius:3px;"></div>
<div class="t" style="left:593.70px;top:475.36px;font-size:11.8px;color:#44546F;font-weight:700;transform:scaleX(0.8180);">TO DO</div>
<div class="b" style="left:857.10px;top:470.25px;width:150.46px;height:17.10px;background:#FFEEEA;border-radius:2px;"></div>
<div class="t" style="left:859.30px;top:472.87px;font-size:13.2px;color:#9E4632;font-weight:400;transform:scaleX(0.9530);text-decoration:line-through;text-decoration-color:#C9372C;">resaerch about openai api</div>
<div class="b" style="left:1010.96px;top:469.35px;width:86.40px;height:17.70px;background:#DFF8F9;border-radius:2px;"></div>
<div class="t" style="left:1013.76px;top:472.87px;font-size:13.2px;color:#2C4A5A;font-weight:400;transform:scaleX(0.9530);">monthly report</div>
<div class="t" style="left:29.30px;top:507.59px;font-size:13.2px;color:#172B4D;font-weight:400;transform:scaleX(0.9300);">Feb 27, 2023, 7:33 PM</div>
<div class="t" style="left:226.00px;top:507.99px;font-size:13.2px;color:#2A5CB9;font-weight:400;transform:scaleX(0.9000);">MD-9</div>
<div class="t" style="left:339.40px;top:507.59px;font-size:13.2px;color:#2A5CB9;font-weight:400;transform:scaleX(0.9400);">Cody Fisher</div>
<svg class="s" style="left:460.30px;top:511.16px;" width="11.40" height="5.80" viewBox="0 0 11.40 5.80"><path d="M1.1 4.8 L5.7 1.1 L10.3 4.8" fill="none" stroke="#F26B3A" stroke-width="1.65" stroke-linecap="round" stroke-linejoin="round"/></svg>
<svg class="s" style="left:476.70px;top:509.74px;" width="10.50" height="9.45" viewBox="0 0 10.50 9.45"><path d="M0.85 4.73 H9.45 M5.77 1.05 L9.45 4.73 L5.77 8.40" fill="none" stroke="#626F86" stroke-width="1.7" stroke-linecap="round" stroke-linejoin="round"/></svg>
<svg class="s" style="left:492.30px;top:509.96px;" width="11.40" height="9.00" viewBox="0 0 11.40 9.00"><path d="M1.1 4.3 L5.7 1.1 L10.3 4.3 M1.1 8 L5.7 4.8 L10.3 8" fill="none" stroke="#F26B3A" stroke-width="1.65" stroke-linecap="round" stroke-linejoin="round"/></svg>
<svg class="s" style="left:542.90px;top:508.66px;" width="12.20" height="12.20" viewBox="0 0 12.20 12.20"><rect x="0" y="0" width="12.2" height="12.2" rx="1.7" fill="#4BADE8"/><path d="M3.1 6.4 L5.3 8.5 L9.2 3.9" fill="none" stroke="#fff" stroke-width="1.7" stroke-linecap="round" stroke-linejoin="round"/></svg>
<div class="b" style="left:590.20px;top:505.66px;width:37.39px;height:19.80px;background:#F1F2F4;border-radius:3px;"></div>
<div class="t" style="left:593.70px;top:510.57px;font-size:11.8px;color:#44546F;font-weight:700;transform:scaleX(0.8180);">TO DO</div>
<div class="t" style="left:857.10px;top:507.59px;font-size:13.2px;color:#172B4D;font-weight:400;transform:scaleX(0.9530);">monthly report</div>
<div class="t" style="left:29.30px;top:542.80px;font-size:13.2px;color:#172B4D;font-weight:400;transform:scaleX(0.9300);">Feb 27, 2023, 7:34 PM</div>
<div class="t" style="left:226.00px;top:543.20px;font-size:13.2px;color:#2A5CB9;font-weight:400;transform:scaleX(0.9000);">MD-9</div>
<div class="t" style="left:339.40px;top:542.80px;font-size:13.2px;color:#2A5CB9;font-weight:400;transform:scaleX(0.9400);">Cody Fisher</div>
<svg class="s" style="left:476.40px;top:545.18px;" width="11.40" height="9.00" viewBox="0 0 11.40 9.00"><path d="M1.1 4.3 L5.7 1.1 L10.3 4.3 M1.1 8 L5.7 4.8 L10.3 8" fill="none" stroke="#F26B3A" stroke-width="1.65" stroke-linecap="round" stroke-linejoin="round"/></svg>
<svg class="s" style="left:542.90px;top:543.88px;" width="12.20" height="12.20" viewBox="0 0 12.20 12.20"><rect x="0" y="0" width="12.2" height="12.2" rx="1.7" fill="#4BADE8"/><path d="M3.1 6.4 L5.3 8.5 L9.2 3.9" fill="none" stroke="#fff" stroke-width="1.7" stroke-linecap="round" stroke-linejoin="round"/></svg>
<div class="b" style="left:590.20px;top:540.88px;width:37.39px;height:19.80px;background:#F1F2F4;border-radius:3px;"></div>
<div class="t" style="left:593.70px;top:545.79px;font-size:11.8px;color:#44546F;font-weight:700;transform:scaleX(0.8180);">TO DO</div>
<div class="b" style="left:857.10px;top:539.77px;width:52.85px;height:17.70px;background:#DFF8F9;border-radius:2px;"></div>
<div class="t" style="left:859.90px;top:543.30px;font-size:13.2px;color:#2C4A5A;font-weight:400;transform:scaleX(0.9530);">prepare </div>
<div class="t" style="left:913.35px;top:542.80px;font-size:13.2px;color:#172B4D;font-weight:400;transform:scaleX(0.9530);">monthly report</div>
<div class="t" style="left:29.30px;top:578.02px;font-size:13.2px;color:#172B4D;font-weight:400;transform:scaleX(0.9300);">May 22, 2023, 6:28 PM</div>
<div class="t" style="left:226.00px;top:578.42px;font-size:13.2px;color:#2A5CB9;font-weight:400;transform:scaleX(0.9000);">MD-9</div>
<svg class="s" style="left:259.44px;top:580.30px;" width="10.20" height="9.18" viewBox="0 0 10.20 9.18"><path d="M0.85 4.59 H9.15 M5.61 1.05 L9.15 4.59 L5.61 8.13" fill="none" stroke="#626F86" stroke-width="1.7" stroke-linecap="round" stroke-linejoin="round"/></svg>
<div class="t" style="left:273.94px;top:578.42px;font-size:13.2px;color:#2A5CB9;font-weight:400;transform:scaleX(0.9000);">CS-33</div>
<div class="t" style="left:339.40px;top:578.02px;font-size:13.2px;color:#2A5CB9;font-weight:400;transform:scaleX(0.9400);">Alis Maries</div>
<svg class="s" style="left:476.40px;top:580.39px;" width="11.40" height="9.00" viewBox="0 0 11.40 9.00"><path d="M1.1 4.3 L5.7 1.1 L10.3 4.3 M1.1 8 L5.7 4.8 L10.3 8" fill="none" stroke="#F26B3A" stroke-width="1.65" stroke-linecap="round" stroke-linejoin="round"/></svg>
<svg class="s" style="left:527.10px;top:579.09px;" width="12.20" height="12.20" viewBox="0 0 12.20 12.20"><rect x="0" y="0" width="12.2" height="12.2" rx="1.7" fill="#4BADE8"/><path d="M3.1 6.4 L5.3 8.5 L9.2 3.9" fill="none" stroke="#fff" stroke-width="1.7" stroke-linecap="round" stroke-linejoin="round"/></svg>
<svg class="s" style="left:544.00px;top:580.59px;" width="10.00" height="9.00" viewBox="0 0 10.00 9.00"><path d="M0.85 4.50 H8.95 M5.50 1.05 L8.95 4.50 L5.50 7.95" fill="none" stroke="#626F86" stroke-width="1.7" stroke-linecap="round" stroke-linejoin="round"/></svg>
<svg class="s" style="left:559.20px;top:579.09px;" width="12.20" height="12.20" viewBox="0 0 12.20 12.20"><rect x="0" y="0" width="12.2" height="12.2" rx="1.7" fill="#4BADE8"/><path d="M3.1 6.4 L5.3 8.5 L9.2 3.9" fill="none" stroke="#fff" stroke-width="1.7" stroke-linecap="round" stroke-linejoin="round"/></svg>
<div class="b" style="left:590.20px;top:576.09px;width:37.39px;height:19.80px;background:#F1F2F4;border-radius:3px;"></div>
<div class="t" style="left:593.70px;top:581.00px;font-size:11.8px;color:#44546F;font-weight:700;transform:scaleX(0.8180);">TO DO</div>
<svg class="s" style="left:631.59px;top:581.20px;" width="10.20" height="9.18" viewBox="0 0 10.20 9.18"><path d="M0.85 4.59 H9.15 M5.61 1.05 L9.15 4.59 L5.61 8.13" fill="none" stroke="#626F86" stroke-width="1.7" stroke-linecap="round" stroke-linejoin="round"/></svg>
<div class="b" style="left:645.79px;top:576.09px;width:34.76px;height:19.80px;background:#F1F2F4;border-radius:3px;"></div>
<div class="t" style="left:649.29px;top:581.00px;font-size:11.8px;color:#44546F;font-weight:700;transform:scaleX(0.8300);">OPEN</div>
<div class="t" style="left:857.10px;top:578.02px;font-size:13.2px;color:#172B4D;font-weight:400;transform:scaleX(0.9530);">prepare monthly report</div>
</div></div>
<div class="b" style="left:22.00px;top:166.20px;width:1306.80px;height:35.50px;background:#F6F9FD;border-radius:3px;"></div>
<div class="t" style="left:30.30px;top:177.93px;font-size:11.3px;color:#44546F;font-weight:700;transform:scaleX(0.8915);">Date of change</div>
<svg class="s" style="left:112.80px;top:177.40px;" width="12.00" height="12.40" viewBox="0 0 12.00 12.40"><path d="M6 11.5 V1.5 M1.2 6.1 L6 1.2 L10.8 6.1" fill="none" stroke="#172B4D" stroke-width="2" stroke-linecap="round" stroke-linejoin="round"/></svg>
<div class="t" style="left:226.90px;top:177.93px;font-size:11.3px;color:#44546F;font-weight:700;transform:scaleX(0.8201);">Key</div>
<svg class="s" style="left:254.50px;top:177.20px;" width="12.50" height="13.00" viewBox="0 0 12.50 13.00"><path d="M0.9 1.3 L1.0 3.9 L5.0 6.4 V12.1 L7.4 10.3 V6.4 L11.5 3.9 L11.6 1.3 Z" fill="none" stroke="#172B4D" stroke-width="1.6" stroke-linejoin="round"/></svg>
<div class="t" style="left:340.00px;top:177.93px;font-size:11.3px;color:#44546F;font-weight:700;transform:scaleX(0.8891);">Updated by</div>
<div class="t" style="left:464.70px;top:177.93px;font-size:11.3px;color:#44546F;font-weight:700;transform:scaleX(0.8624);">P</div>
<svg class="s" style="left:481.70px;top:177.20px;" width="12.50" height="13.00" viewBox="0 0 12.50 13.00"><path d="M0.9 1.3 L1.0 3.9 L5.0 6.4 V12.1 L7.4 10.3 V6.4 L11.5 3.9 L11.6 1.3 Z" fill="none" stroke="#172B4D" stroke-width="1.6" stroke-linejoin="round"/></svg>
<div class="t" style="left:544.40px;top:177.93px;font-size:11.3px;color:#44546F;font-weight:700;transform:scaleX(0.9852);">T</div>
<div class="t" style="left:590.80px;top:177.93px;font-size:11.3px;color:#44546F;font-weight:700;transform:scaleX(0.8919);">Status</div>
<svg class="s" style="left:631.70px;top:177.20px;" width="12.50" height="13.00" viewBox="0 0 12.50 13.00"><path d="M0.9 1.3 L1.0 3.9 L5.0 6.4 V12.1 L7.4 10.3 V6.4 L11.5 3.9 L11.6 1.3 Z" fill="none" stroke="#172B4D" stroke-width="1.6" stroke-linejoin="round"/></svg>
<div class="t" style="left:856.00px;top:177.93px;font-size:11.3px;color:#44546F;font-weight:700;transform:scaleX(0.8900);">Summary</div>
<div class="b" style="left:1333.00px;top:256.20px;width:8.20px;height:45.00px;background:#DCDFE4;border-radius:4px;"></div>
<div class="t" style="left:993.30px;top:611.23px;font-size:13.2px;color:#44546F;font-weight:400;transform:scaleX(0.9221);">Logs per page:</div>
<div class="b" style="left:1079.40px;top:604.00px;width:63.10px;height:32.00px;background:#F2F4F7;border-radius:3px;"></div>
<div class="t" style="left:1089.50px;top:611.23px;font-size:13.2px;color:#172B4D;font-weight:400;transform:scaleX(0.9309);">100</div>
<svg class="s" style="left:1121.00px;top:616.30px;" width="7.20" height="4.80" viewBox="0 0 7.20 4.80"><path d="M0.75 0.75 L3.60 3.90 L6.45 0.75" fill="none" stroke="#172B4D" stroke-width="2.0" stroke-linecap="round" stroke-linejoin="round"/></svg>
<svg class="s" style="left:1161.20px;top:613.30px;" width="7.00" height="10.50" viewBox="0 0 7.00 10.50"><path d="M5.9 0.9 L1.1 5.2 L5.9 9.6" fill="none" stroke="#B3B9C4" stroke-width="1.6" stroke-linecap="round" stroke-linejoin="round"/></svg>
<div class="b" style="left:1179.30px;top:604.00px;width:28.50px;height:32.00px;background:#E9F2FF;border-radius:3px;"></div>
<div class="t" style="left:1190.60px;top:611.23px;font-size:13.2px;color:#1F56B8;font-weight:400;transform:scaleX(0.8038);">1</div>
<div class="t" style="left:1218.50px;top:611.23px;font-size:13.2px;color:#172B4D;font-weight:400;transform:scaleX(0.9536);">2</div>
<svg class="s" style="left:1247.10px;top:613.30px;" width="7.00" height="10.50" viewBox="0 0 7.00 10.50"><path d="M1.1 0.9 L5.9 5.2 L1.1 9.6" fill="none" stroke="#172B4D" stroke-width="1.9" stroke-linecap="round" stroke-linejoin="round"/></svg>
<svg class="s" style="left:1293.50px;top:93.80px;" width="14.00" height="20.00" viewBox="0 0 14.00 20.00"><path d="M1 1 V15.6 L4.6 12.3 L7.2 18.2 L9.7 17.1 L7.1 11.4 H12 Z" fill="#fff" stroke="#111" stroke-width="1.1" stroke-linejoin="round"/></svg>
</body></html>
